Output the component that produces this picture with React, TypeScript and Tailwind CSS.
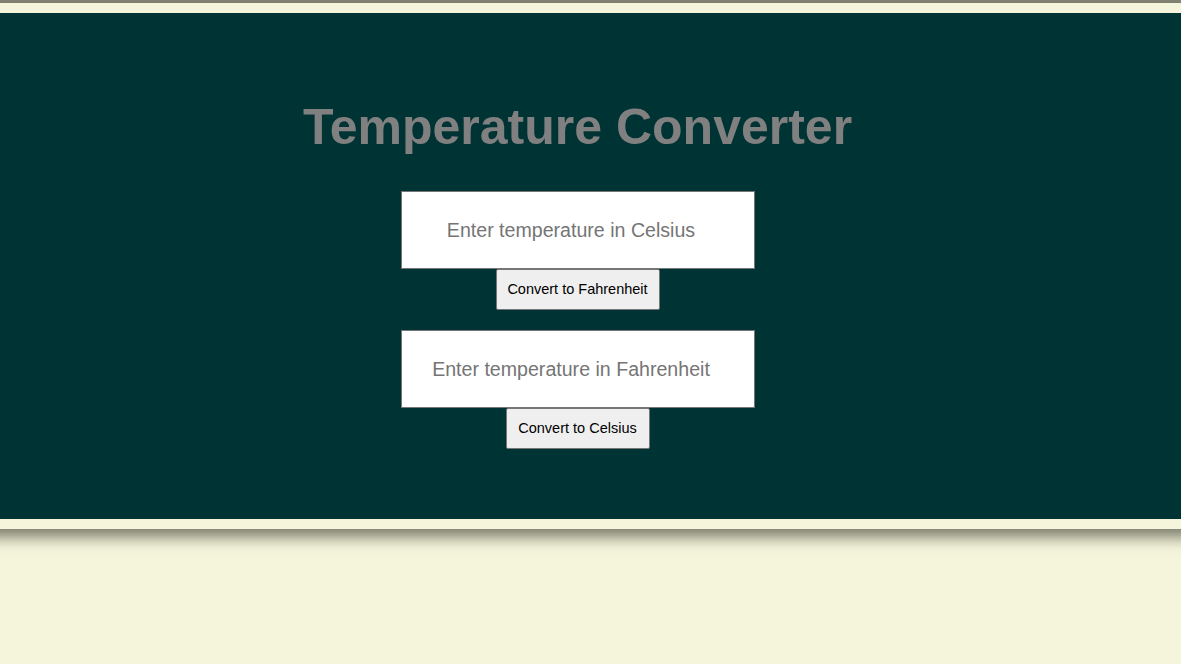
import React from "react";

export default function App() {
  return (
    <div className="min-h-[664px] w-full overflow-hidden bg-[#f5f5dc]" style={{ fontFamily: '"Liberation Sans", Arial, sans-serif' }}>
      <div className="h-[3px] w-full bg-[#878777]" />
      <div className="-mx-[30px] bg-[#f5f5dc] px-[30px] py-[10px] shadow-[0_8px_14px_rgba(40,40,30,0.6)]">
        <div className="flex h-[506px] flex-col bg-[#003334]">
          <div className="flex w-[1155px] flex-col items-center">
            <h1 className="mt-[86px] text-[50px] font-bold leading-[57px] text-[#808080]">Temperature Converter</h1>
            <input
              type="text"
              placeholder="Enter temperature in Celsius"
              className="mt-[35px] h-[78px] w-[354px] border border-[#767676] bg-white pl-[20px] pr-[33px] text-center text-[19.6px] text-black outline-none placeholder:text-[#757575]"
            />
            <button className="h-[41px] w-[164px] rounded-[2px] border border-[#767676] bg-[#efefef] pt-[1px] text-[14.5px] text-black">
              Convert to Fahrenheit
            </button>
            <input
              type="text"
              placeholder="Enter temperature in Fahrenheit"
              className="mt-[20px] h-[78px] w-[354px] border border-[#767676] bg-white pl-[20px] pr-[33px] text-center text-[19.6px] text-black outline-none placeholder:text-[#757575]"
            />
            <button className="h-[41px] w-[144px] rounded-[2px] border border-[#767676] bg-[#efefef] pt-[1px] text-[14.5px] text-black">
              Convert to Celsius
            </button>
          </div>
        </div>
      </div>
    </div>
  );
}
